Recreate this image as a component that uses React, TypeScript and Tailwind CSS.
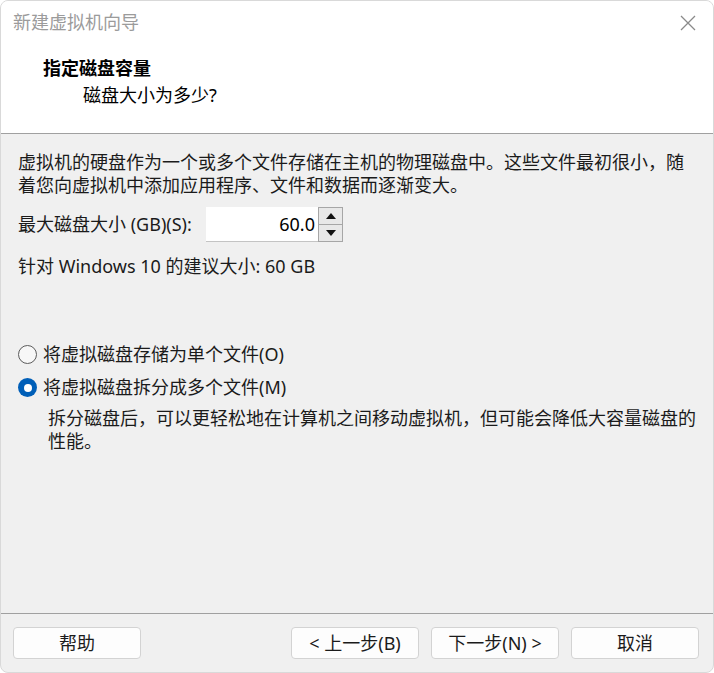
import React from "react";

const font = { fontFamily: '"Noto Sans", "Noto Sans CJK SC", sans-serif' };

function Radio({ checked }: { checked: boolean }) {
  if (checked) {
    return (
      <span className="flex h-[19px] w-[19px] items-center justify-center rounded-full bg-[#005fb8]">
        <span className="h-[8px] w-[8px] rounded-full bg-white" />
      </span>
    );
  }
  return <span className="block h-[19px] w-[19px] rounded-full border border-[#5c5c5c] bg-[#f7f7f7]" />;
}

function Btn({ children }: { children: React.ReactNode }) {
  return (
    <button className="flex h-[32px] w-[128px] items-center justify-center rounded-[4px] border border-[#d3d3d3] bg-[#fdfdfd] text-[18px] text-[#1b1b1b]">
      {children}
    </button>
  );
}

export default function App() {
  return (
    <div className="bg-white" style={font}>
      <div className="flex h-[673px] w-[714px] flex-col overflow-hidden rounded-[8px] border border-[#d9d9d9] bg-[#f0f0f0] text-[#1b1b1b]">
        {/* header */}
        <div className="flex h-[133px] shrink-0 flex-col border-b border-[#a0a0a0] bg-white">
          <div className="flex h-[43px] items-center justify-between pl-[12px] pr-[17px]">
            <span className="text-[18px] text-[#9b9b9b]">新建虚拟机向导</span>
            <svg width="16" height="16" viewBox="0 0 16 16" className="mt-[1px]">
              <path d="M1 1 L15 15 M15 1 L1 15" stroke="#8a8a8a" strokeWidth="1.3" fill="none" />
            </svg>
          </div>
          <div className="mt-[13px] pl-[42px] text-[18px] font-bold leading-[23px] text-black">指定磁盘容量</div>
          <div className="mt-[4px] pl-[82px] text-[18px] leading-[23px] text-black">磁盘大小为多少?</div>
        </div>

        {/* body */}
        <div className="flex flex-1 flex-col px-[17px] pt-[17px] text-[18px] leading-[23px]">
          <p>
            虚拟机的硬盘作为一个或多个文件存储在主机的物理磁盘中。这些文件最初很小，随
            <br />
            着您向虚拟机中添加应用程序、文件和数据而逐渐变大。
          </p>
          <div className="mt-[10px] flex h-[35px] items-center">
            <span className="w-[188px] shrink-0">最大磁盘大小 (GB)(S):</span>
            <div className="flex h-[35px] w-[112px] items-center justify-end border-b border-[#c4c4c4] bg-white pr-[3px] text-black">
              60.0
            </div>
            <div className="flex h-[35px] w-[25px] flex-col border border-[#a6a6a6] bg-[#e8e8e8]">
              <div className="flex flex-1 items-center justify-center border-b border-[#a6a6a6]">
                <svg width="10" height="6" viewBox="0 0 10 6">
                  <path d="M0 6 L5 0 L10 6 Z" fill="#111" />
                </svg>
              </div>
              <div className="flex flex-1 items-center justify-center">
                <svg width="10" height="6" viewBox="0 0 10 6">
                  <path d="M0 0 L10 0 L5 6 Z" fill="#111" />
                </svg>
              </div>
            </div>
          </div>
          <div className="mt-[13px]">针对 Windows 10 的建议大小: 60 GB</div>

          <div className="mt-[65px] flex items-center gap-[6px]">
            <Radio checked={false} />
            <span>将虚拟磁盘存储为单个文件(O)</span>
          </div>
          <div className="mt-[10px] flex items-center gap-[6px]">
            <Radio checked={true} />
            <span>将虚拟磁盘拆分成多个文件(M)</span>
          </div>
          <p className="mt-[8px] pl-[30px]">
            拆分磁盘后，可以更轻松地在计算机之间移动虚拟机，但可能会降低大容量磁盘的
            <br />
            性能。
          </p>
        </div>

        {/* footer */}
        <div className="flex h-[59px] shrink-0 items-start border-t border-[#a0a0a0] px-[12px] pt-[13px]">
          <Btn>帮助</Btn>
          <div className="flex-1" />
          <div className="mr-[2px] flex gap-[12px]">
            <Btn>&lt; 上一步(B)</Btn>
            <Btn>下一步(N) &gt;</Btn>
            <Btn>取消</Btn>
          </div>
        </div>
      </div>
    </div>
  );
}
